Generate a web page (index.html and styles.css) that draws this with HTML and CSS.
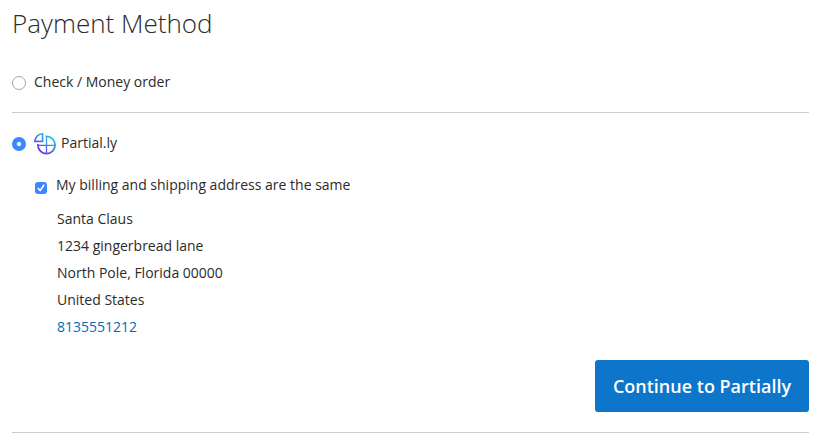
FILE: index.html
```html
<!DOCTYPE html>
<html lang="en">
<head>
    <meta charset="UTF-8">
    <meta name="viewport" content="width=device-width, initial-scale=1.0">
    <title>Payment Method</title>
    <link rel="stylesheet" href="styles.css">
</head>
<body>
    <div class="checkout">
        <h1 class="step-title">Payment Method</h1>

        <div class="method">
            <label class="method-title">
                <input type="radio" class="radio" name="payment">
                <span>Check / Money order</span>
            </label>
        </div>

        <div class="method active">
            <label class="method-title">
                <input type="radio" class="radio" name="payment" checked>
                <svg class="logo" width="24" height="24" viewBox="0 0 24 24" fill="none" stroke="url(#logoFill)" stroke-width="1.8">
                    <defs>
                        <linearGradient id="logoFill" gradientUnits="userSpaceOnUse" x1="19" y1="5" x2="7" y2="20">
                            <stop offset="0" stop-color="#1fc4ea"/>
                            <stop offset="1" stop-color="#6a35e8"/>
                        </linearGradient>
                    </defs>
                    <path d="M9.6 1.8V9.4H1.8A8 7.8 0 0 1 9.6 1.8Z" stroke-width="1.6"/>
                    <path d="M12.6 4.4H13.5A8.6 8.6 0 1 1 4.9 13V12.1"/>
                    <path d="M4.9 13.4H22.1M13.5 4.4V21.6" stroke-width="1.3"/>
                </svg>
                <span>Partial.ly</span>
            </label>

            <div class="method-content">
                <label class="same-address">
                    <input type="checkbox" class="checkbox" checked>
                    <svg class="tick" width="12" height="12" viewBox="0 0 12 12" fill="none" stroke="#fff" stroke-width="1.6" stroke-linecap="round" stroke-linejoin="round">
                        <path d="M3.2 6.4L5.1 8.6L8.8 3.2"/>
                    </svg>
                    <span>My billing and shipping address are the same</span>
                </label>

                <div class="address">
                    Santa Claus<br>
                    1234 gingerbread lane<br>
                    North Pole, Florida 00000<br>
                    United States<br>
                    <a href="tel:8135551212">8135551212</a>
                </div>
            </div>

            <div class="actions">
                <button type="button" class="continue">Continue to Partially</button>
            </div>
        </div>
    </div>
</body>
</html>
```

FILE: styles.css
```css
body {
    margin: 0;
    background: #fff;
    color: #2b2b2b;
    font-family: "Open Sans", "Noto Sans", sans-serif;
    font-size: 14px;
    line-height: 20px;
}
.checkout {
    padding: 5px 18px 0 12px;
}
.step-title {
    margin: 0 0 1px;
    font-size: 26px;
    font-weight: 300;
    line-height: 36px;
}
.method {
    padding-top: 30px;
    border-bottom: 1px solid #ccc;
}
.method-title {
    display: flex;
    align-items: center;
    height: 20px;
    padding-bottom: 20px;
}
.method.active {
    padding-top: 20px;
}
.radio {
    appearance: none;
    box-sizing: border-box;
    width: 14px;
    height: 14px;
    margin: 2px 8px 0 0;
    border: 1px solid #a6a6a6;
    border-radius: 50%;
    background: #fff;
}
.radio:checked {
    border: 0;
    background: radial-gradient(circle, #fff 1.5px, #3b88fd 2.7px);
}
.logo {
    margin: 2px 4px 0 -1px;
}
.method-content {
    padding-left: 23px;
}
.same-address {
    position: relative;
    display: flex;
    align-items: center;
    margin-top: 2px;
}
.checkbox {
    appearance: none;
    width: 12px;
    height: 12px;
    margin: 5px 9px 0 0;
    border-radius: 3px;
    background: #3b86fc;
}
.tick {
    position: absolute;
    left: 0;
    top: 7px;
}
.address {
    padding: 10px 0 0 22px;
    line-height: 27px;
}
.address a {
    color: #006bb4;
    text-decoration: none;
}
.actions {
    display: flex;
    justify-content: flex-end;
    padding: 20px 0;
}
.continue {
    width: 214px;
    height: 52px;
    padding: 0;
    border: 0;
    border-radius: 3px;
    background: #0e76ca;
    color: #fff;
    font-family: inherit;
    font-size: 18px;
    font-weight: 600;
    cursor: pointer;
}
```
